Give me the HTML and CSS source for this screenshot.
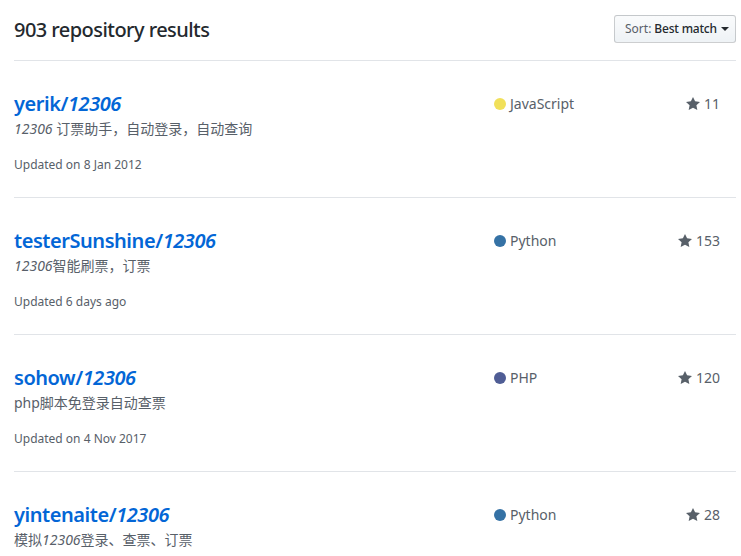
FILE: index.html
```html
<!DOCTYPE html>
<html>
<head>
<meta charset="utf-8">
<link rel="stylesheet" href="styles.css">
</head>
<body>
<div class="page">
  <div class="header">
    <h3 class="count">903 repository results</h3>
    <button class="sort"><span class="sort-label">Sort:</span><span class="sort-value">Best match</span><span class="caret"></span></button>
  </div>
  <ul class="repo-list">
    <li class="repo">
      <div class="col-main">
        <h3 class="repo-title"><a href="#">yerik/<em>12306</em></a></h3>
        <p class="desc"><em>12306</em> 订票助手，自动登录，自动查询</p>
        <p class="updated">Updated on 8 Jan 2012</p>
      </div>
      <div class="col-lang"><span class="dot js"></span>JavaScript</div>
      <div class="col-stars"><svg class="star" viewBox="0 0 14 16" width="14" height="16"><path d="M14 6l-4.9-.64L7 1 4.9 5.36 0 6l3.6 3.26L2.67 14 7 11.67 11.33 14l-.93-4.74L14 6z"/></svg>11</div>
    </li>
    <li class="repo">
      <div class="col-main">
        <h3 class="repo-title"><a href="#">testerSunshine/<em>12306</em></a></h3>
        <p class="desc"><em>12306</em>智能刷票，订票</p>
        <p class="updated">Updated 6 days ago</p>
      </div>
      <div class="col-lang"><span class="dot py"></span>Python</div>
      <div class="col-stars"><svg class="star" viewBox="0 0 14 16" width="14" height="16"><path d="M14 6l-4.9-.64L7 1 4.9 5.36 0 6l3.6 3.26L2.67 14 7 11.67 11.33 14l-.93-4.74L14 6z"/></svg>153</div>
    </li>
    <li class="repo">
      <div class="col-main">
        <h3 class="repo-title"><a href="#">sohow/<em>12306</em></a></h3>
        <p class="desc">php脚本免登录自动查票</p>
        <p class="updated">Updated on 4 Nov 2017</p>
      </div>
      <div class="col-lang"><span class="dot php"></span>PHP</div>
      <div class="col-stars"><svg class="star" viewBox="0 0 14 16" width="14" height="16"><path d="M14 6l-4.9-.64L7 1 4.9 5.36 0 6l3.6 3.26L2.67 14 7 11.67 11.33 14l-.93-4.74L14 6z"/></svg>120</div>
    </li>
    <li class="repo">
      <div class="col-main">
        <h3 class="repo-title"><a href="#">yintenaite/<em>12306</em></a></h3>
        <p class="desc">模拟<em>12306</em>登录、查票、订票</p>
        <p class="updated">Updated on 1 Jan 2018</p>
      </div>
      <div class="col-lang"><span class="dot py"></span>Python</div>
      <div class="col-stars"><svg class="star" viewBox="0 0 14 16" width="14" height="16"><path d="M14 6l-4.9-.64L7 1 4.9 5.36 0 6l3.6 3.26L2.67 14 7 11.67 11.33 14l-.93-4.74L14 6z"/></svg>28</div>
    </li>
  </ul>
</div>
</body>
</html>
```
FILE: styles.css
```css
* { box-sizing: border-box; }
html, body { margin: 0; padding: 0; background: #fff; }
body {
  font-family: "Noto Sans", "Noto Sans CJK SC", sans-serif;
  color: #24292e;
  overflow: hidden;
}
.page { padding: 0 5px 0 14px; }
.header {
  display: flex;
  justify-content: space-between;
  align-items: center;
  height: 61px;
  border-bottom: 1px solid #e1e4e8;
}
.count {
  margin: 0;
  font-size: 20px;
  font-weight: 500;
  line-height: 24px;
  color: #24292e;
  letter-spacing: -0.55px;
}
.sort {
  display: flex;
  align-items: center;
  height: 28px;
  width: 122px;
  padding: 0 10px;
  margin-top: -3px;
  border: 1px solid rgba(27,31,35,.2);
  border-radius: 3px;
  background: linear-gradient(#fafbfc, #eff3f6 90%);
  font-family: inherit;
  font-size: 12px;
  color: #24292e;
  white-space: nowrap;
}
.sort-label { color: #586069; margin-right: 3px; }
.sort-value { font-weight: 500; letter-spacing: -0.2px; }
.caret {
  display: inline-block;
  margin-left: 4px;
  border-top: 4px solid #24292e;
  border-left: 4px solid transparent;
  border-right: 4px solid transparent;
}
.repo-list { list-style: none; margin: 0; padding: 0; }
.repo {
  display: grid;
  grid-template-columns: 481px 120px 121px;
  padding: 31px 0 23px;
  border-bottom: 1px solid #e1e4e8;
}
.repo-title {
  margin: 0;
  font-size: 20px;
  line-height: 24px;
  font-weight: 600;
}
.repo-title a { color: #0366d6; text-decoration: none; letter-spacing: -0.45px; }
.repo-title em { font-style: italic; }
.desc {
  margin: 3px 0 0;
  font-size: 14px;
  line-height: 20px;
  color: #586069;
}
.desc em { font-style: italic; }
.updated {
  margin: 17px 0 0;
  font-size: 12px;
  line-height: 18px;
  color: #586069;
}
.col-lang, .col-stars {
  font-size: 14px;
  line-height: 24px;
  color: #586069;
  height: 24px;
  display: flex;
  align-items: center;
}
.col-stars { justify-content: flex-end; padding-right: 16px; }
.dot {
  width: 12px;
  height: 12px;
  border-radius: 50%;
  margin-left: -1px;
  margin-right: 4px;
}
.dot.js { background: #f1e05a; }
.dot.py { background: #3572a5; }
.dot.php { background: #4f5d95; }
.star { fill: #586069; margin-right: 4px; }
```
